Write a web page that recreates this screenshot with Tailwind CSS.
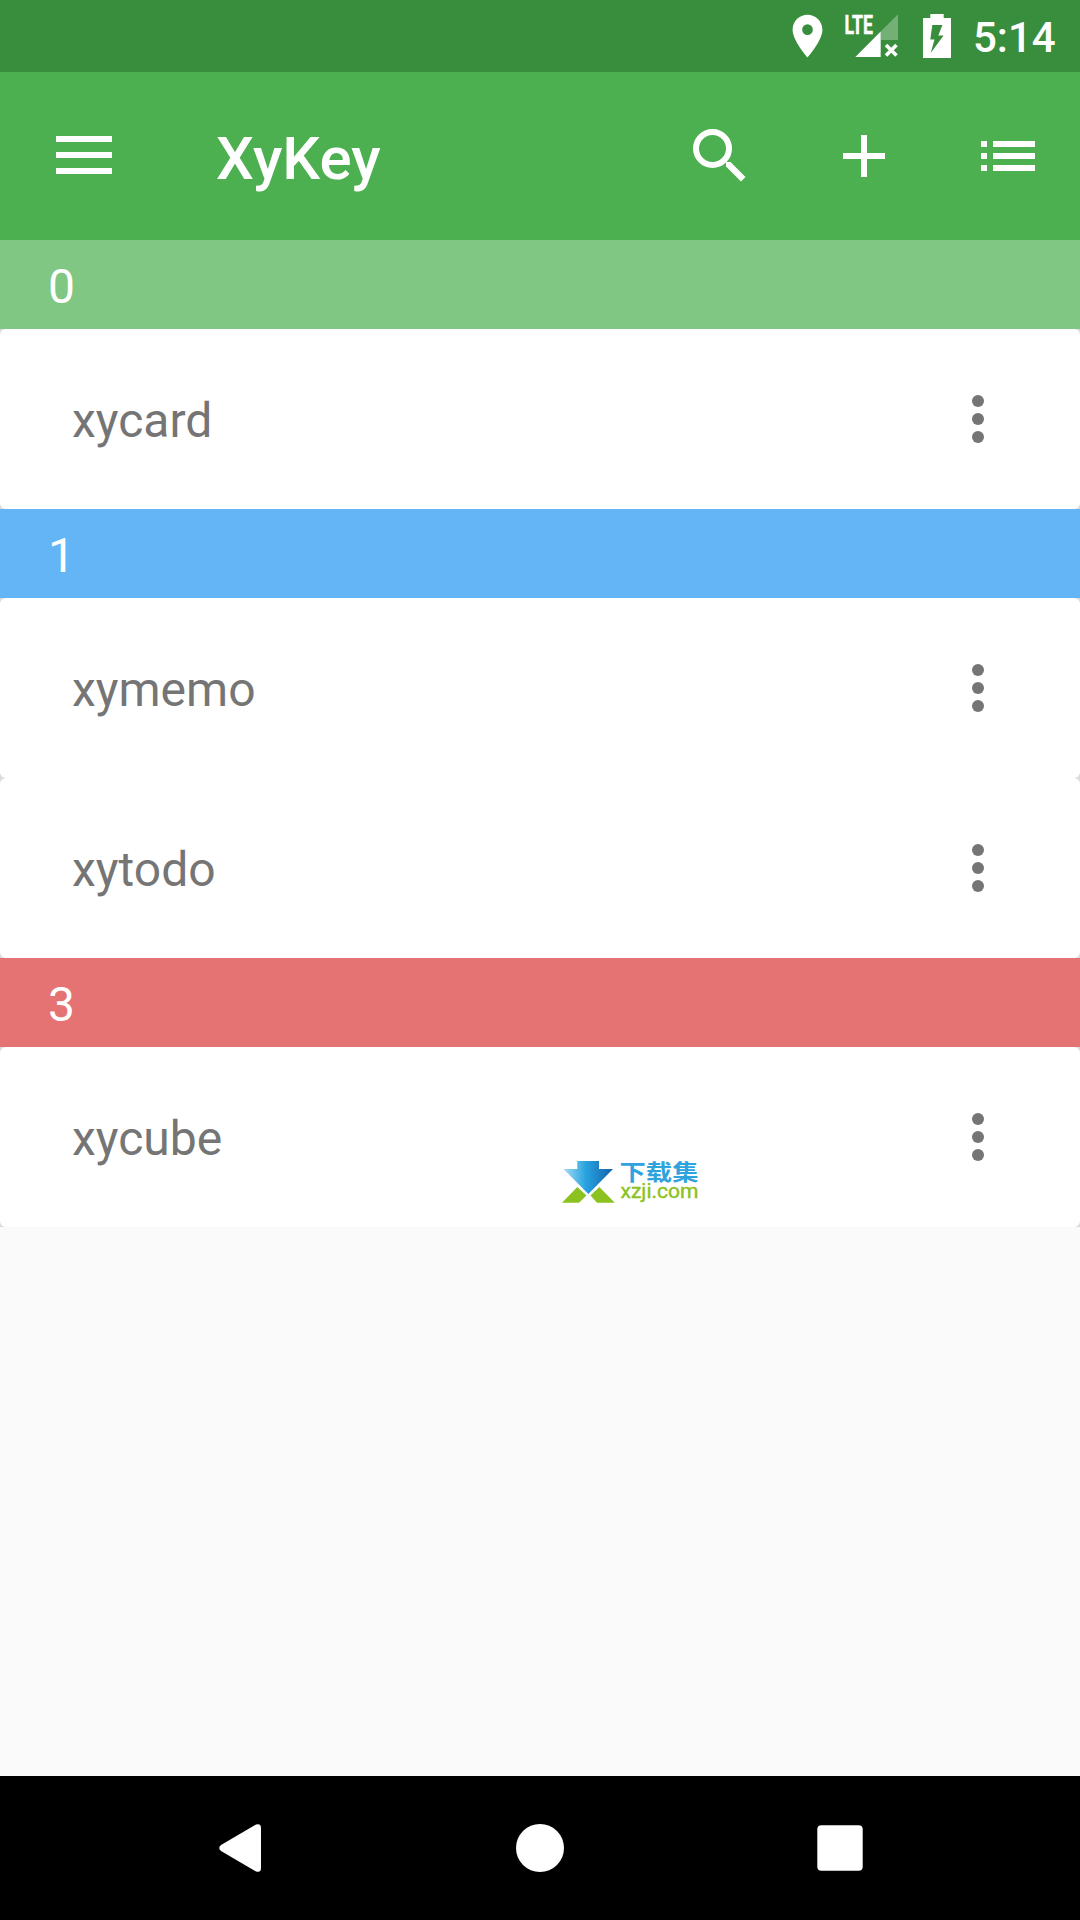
<!DOCTYPE html>
<html lang="en">
<head>
<meta charset="utf-8">
<title>XyKey</title>
<script src="https://cdn.jsdelivr.net/npm/@tailwindcss/browser@4"></script>
</head>
<body class="bg-[#fafafa] font-[Roboto,sans-serif]">
<div class="relative flex h-[1920px] w-[1080px] flex-col overflow-hidden">
  <!-- Status bar -->
  <header class="flex h-[72px] shrink-0 bg-[#388e3c] text-white">
    <svg class="ml-[780px] h-[72px] w-[180px] shrink-0" viewBox="780 0 180 72" fill="currentColor">
      <path transform="translate(782 10.5) scale(2.125)" d="M12 2C8.130 2 5 5.130 5 9c0 5.250 7 13 7 13s7-7.750 7-13c0-3.870-3.130-7-7-7zm0 9.500a2.500 2.500 0 0 1 0-5 2.500 2.500 0 0 1 0 5z"/>
      <text x="844.5" y="33.5" font-size="26" font-weight="700" textLength="28.5" lengthAdjust="spacingAndGlyphs" stroke="currentColor" stroke-width=".5">LTE</text>
      <path d="M855.3 57H880.7V31.6z"/>
      <path fill-opacity=".3" d="M880.7 31.6L898 14.3V40H880.7z"/>
      <path d="M886 45L896.500 55.500M896.500 45L886 55.500" stroke="currentColor" stroke-width="3.6"/>
      <path fill-rule="evenodd" d="M930.3 14h13.400v4h7.300v40h-28V18h7.300zM932.3 25L930.3 39.500H934.5L930.7 53L943.6 35.500H938.300L942.400 25z"/>
    </svg>
    <span class="ml-[13px] pt-[14px] text-[42px] leading-[48px] font-medium">5:14</span>
  </header>

  <!-- App bar -->
  <div class="flex h-[168px] shrink-0 items-center bg-[#4caf50] text-white">
    <svg class="ml-[56px] h-[38px] w-[56px] -translate-y-px" viewBox="0 0 56 38" fill="currentColor"><path d="M0 0h56v6H0zM0 16h56v6H0zM0 32h56v6H0z"/></svg>
    <h1 class="ml-[104px] w-[440px] pt-[6px] text-[60px] leading-[72px] font-medium">XyKey</h1>
    <svg class="ml-[28px] h-[168px] w-[396px]" viewBox="684 72 396 168" fill="currentColor">
      <circle cx="712.5" cy="148.5" r="16.5" fill="none" stroke="currentColor" stroke-width="6"/>
      <path d="M726 162h4.500L745.500 177L741 181.500L726 166.500z"/>
      <path d="M861 135h6v18h18v6h-18v18h-6v-18h-18v-6h18z"/>
      <path d="M981 141h6v6h-6zM993 141h42v6h-42zM981 153h6v6h-6zM993 153h42v6h-42zM981 165h6v6h-6zM993 165h42v6h-42z"/>
    </svg>
  </div>

  <!-- Entries -->
  <main class="flex flex-col bg-[#dcdcdc] text-[48px] leading-[56px] text-[#757575]">
    <h2 class="h-[89px] bg-[#81c784] pt-[19px] pl-[48px] text-white">0</h2>
    <div class="flex h-[180px] items-center justify-between rounded-[6px] bg-white pr-[96px] pl-[72px]">
      <span class="pt-[4px]">xycard</span>
      <svg class="h-12 w-3" viewBox="0 0 12 48" fill="currentColor"><circle cx="6" cy="6" r="6"/><circle cx="6" cy="24" r="6"/><circle cx="6" cy="42" r="6"/></svg>
    </div>
    <h2 class="h-[89px] bg-[#64b5f6] pt-[19px] pl-[48px] text-white">1</h2>
    <div class="flex h-[180px] items-center justify-between rounded-[6px] bg-white pr-[96px] pl-[72px]">
      <span class="pt-[4px]">xymemo</span>
      <svg class="h-12 w-3" viewBox="0 0 12 48" fill="currentColor"><circle cx="6" cy="6" r="6"/><circle cx="6" cy="24" r="6"/><circle cx="6" cy="42" r="6"/></svg>
    </div>
    <div class="flex h-[180px] items-center justify-between rounded-[6px] bg-white pr-[96px] pl-[72px]">
      <span class="pt-[4px]">xytodo</span>
      <svg class="h-12 w-3" viewBox="0 0 12 48" fill="currentColor"><circle cx="6" cy="6" r="6"/><circle cx="6" cy="24" r="6"/><circle cx="6" cy="42" r="6"/></svg>
    </div>
    <h2 class="h-[89px] bg-[#e57373] pt-[19px] pl-[48px] text-white">3</h2>
    <div class="flex h-[180px] items-center justify-between rounded-[6px] bg-white pr-[96px] pl-[72px]">
      <span class="pt-[4px]">xycube</span>
      <svg class="h-12 w-3" viewBox="0 0 12 48" fill="currentColor"><circle cx="6" cy="6" r="6"/><circle cx="6" cy="24" r="6"/><circle cx="6" cy="42" r="6"/></svg>
    </div>
  </main>

  <!-- Navigation bar -->
  <nav class="mt-auto h-[144px] shrink-0 bg-black">
    <svg class="h-[144px] w-[1080px]" viewBox="0 1776 1080 144" fill="#fff">
      <path d="M221 1845L256 1824.500Q261 1823 261 1828V1868Q261 1873 256 1871.500L221 1851Q217.500 1848 221 1845z"/>
      <circle cx="540" cy="1848" r="24"/>
      <rect x="817.3" y="1825.3" width="45.4" height="45.4" rx="4"/>
    </svg>
  </nav>

  <!-- Watermark -->
  <svg class="absolute top-[1150px] left-[550px] h-[60px] w-[160px]" viewBox="550 1150 160 60">
    <defs><linearGradient id="arrow" x1="0" y1="0" x2="1" y2="0"><stop offset="0" stop-color="#a5dcf5"/><stop offset=".45" stop-color="#28a3df"/><stop offset="1" stop-color="#1560ad"/></linearGradient></defs>
    <path fill="url(#arrow)" d="M577.3 1161H599v8h14L588.300 1194L563.500 1169H577.300z"/>
    <path fill="#8cc21f" d="M577.300 1187L586.500 1195.500L579 1202.700H562zM599.300 1187L614.800 1202.700H597L590.500 1195.500z"/>
    <text x="619.5" y="1180.3" font-size="22" font-weight="700" fill="#2ea3de" textLength="79" lengthAdjust="spacingAndGlyphs" font-family="Noto Sans CJK SC, sans-serif">下载集</text>
    <text x="620.5" y="1198" font-size="19.5" fill="#8cc21f" stroke="#8cc21f" stroke-width=".4" textLength="78" lengthAdjust="spacingAndGlyphs" font-family="Roboto, sans-serif">xzji.com</text>
  </svg>
</div>
</body>
</html>
